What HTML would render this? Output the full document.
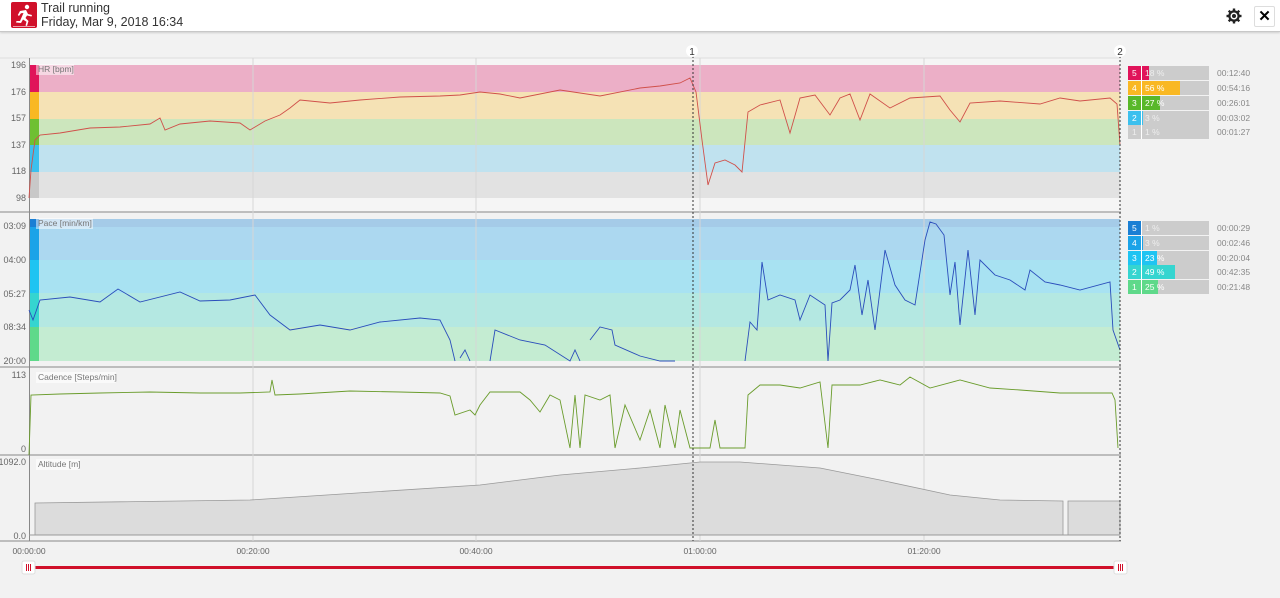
<!DOCTYPE html>
<html><head><meta charset="utf-8"><style>
body{margin:0;width:1280px;height:598px;background:#f2f2f2;font-family:"Liberation Sans",sans-serif;overflow:hidden;position:relative}
.hdr{position:absolute;left:0;top:0;width:1280px;height:31px;background:#fff;border-bottom:1px solid #c8c8c8;box-shadow:0 1px 2px rgba(0,0,0,.15)}
.logo{position:absolute;left:11px;top:2px;width:26px;height:26px;background:#d0102a;border-radius:2px}
.t1{position:absolute;left:41px;top:1px;font-size:12.5px;color:#333}
.t2{position:absolute;left:41px;top:15px;font-size:12.5px;color:#333}
.x{position:absolute;left:1254px;top:6px;width:19px;height:19px;border:1px solid #ddd;border-radius:2px;font-size:15px;font-weight:bold;text-align:center;line-height:19px}
svg text{font-family:"Liberation Sans",sans-serif}
</style></head><body>
<div class="hdr">
<div class="logo"><svg width="26" height="26" viewBox="0 0 26 26"><g fill="#fff"><circle cx="16" cy="5" r="2.2"/><path d="M9 9 L15 8 L17 12 L21 13 L20.5 14.5 L16 13.5 L14.5 16 L17.5 19 L16 24 L14.5 23.5 L15.5 19.8 L12 17.5 L10 21 L5 20.5 L5.5 19 L9 19 L12.5 11 L10 11.3 L8 14 L6.8 13 Z"/></g><rect x="2" y="24" width="22" height="1" fill="#fff" opacity=".6"/></svg></div>
<div class="t1">Trail running</div><div class="t2">Friday, Mar 9, 2018 16:34</div>
<svg style="position:absolute;left:1226px;top:8px" width="16" height="16" viewBox="0 0 16 16"><circle cx="8" cy="8" r="4.5" fill="none" stroke="#222" stroke-width="2.5"/><g stroke="#222" stroke-width="2.4"><line x1="8" y1="0.5" x2="8" y2="15.5"/><line x1="0.5" y1="8" x2="15.5" y2="8"/><line x1="2.7" y1="2.7" x2="13.3" y2="13.3"/><line x1="13.3" y1="2.7" x2="2.7" y2="13.3"/></g><circle cx="8" cy="8" r="3.5" fill="#fff"/><circle cx="8" cy="8" r="2" fill="#222"/></svg>
<div class="x">✕</div>
</div>
<svg width="1280" height="598" style="position:absolute;left:0;top:0">
<!-- panel backgrounds -->
<rect x="29" y="58" width="1091" height="154" fill="#f5f5f5"/>
<line x1="0" y1="58" x2="1121" y2="58" stroke="#ddd"/>
<!-- HR bands -->
<rect x="29" y="65" width="1091" height="27" fill="#ecafc7"/>
<rect x="29" y="92" width="1091" height="27" fill="#f5e2b5"/>
<rect x="29" y="119" width="1091" height="26" fill="#cce6bd"/>
<rect x="29" y="145" width="1091" height="27" fill="#c0e2ef"/>
<rect x="29" y="172" width="1091" height="26" fill="#e2e2e2"/>
<rect x="29" y="65" width="10" height="27" fill="#e0145a"/>
<rect x="29" y="92" width="10" height="27" fill="#f9b823"/>
<rect x="29" y="119" width="10" height="26" fill="#6fc032"/>
<rect x="29" y="145" width="10" height="27" fill="#3cc0ee"/>
<rect x="29" y="172" width="10" height="26" fill="#c8c8c8"/>
<line x1="0" y1="212" x2="1121" y2="212" stroke="#888"/>
<!-- Pace bands -->
<rect x="29" y="219" width="1091" height="8" fill="#a5cbe8"/>
<rect x="29" y="227" width="1091" height="33" fill="#acd8f0"/>
<rect x="29" y="260" width="1091" height="33" fill="#a8e2f2"/>
<rect x="29" y="293" width="1091" height="34" fill="#b4e8e2"/>
<rect x="29" y="327" width="1091" height="34" fill="#c4ecd2"/>
<rect x="29" y="219" width="10" height="8" fill="#1a7fd4"/>
<rect x="29" y="227" width="10" height="33" fill="#1ba3e8"/>
<rect x="29" y="260" width="10" height="33" fill="#1fc4f2"/>
<rect x="29" y="293" width="10" height="34" fill="#35d5d0"/>
<rect x="29" y="327" width="10" height="34" fill="#5fd98a"/>
<line x1="0" y1="367" x2="1121" y2="367" stroke="#888"/>
<line x1="0" y1="455" x2="1121" y2="455" stroke="#888"/>
<line x1="0" y1="541" x2="1121" y2="541" stroke="#888"/>
<line x1="29.5" y1="58" x2="29.5" y2="541" stroke="#888"/>
<!-- grid -->
<g stroke="#d6d6d6"><line x1="253" y1="58" x2="253" y2="541"/><line x1="476" y1="58" x2="476" y2="541"/><line x1="700" y1="58" x2="700" y2="541"/><line x1="924" y1="58" x2="924" y2="541"/></g>
<!-- labels -->
<g font-size="9" fill="#666" text-anchor="end">
<text x="26" y="68">196</text><text x="26" y="95">176</text><text x="26" y="121">157</text><text x="26" y="148">137</text><text x="26" y="174">118</text><text x="26" y="201">98</text>
<text x="26" y="229">03:09</text><text x="26" y="263">04:00</text><text x="26" y="297">05:27</text><text x="26" y="330">08:34</text><text x="26" y="364">20:00</text>
<text x="26" y="378">113</text><text x="26" y="452">0</text>
<text x="26" y="465">1092.0</text><text x="26" y="539">0.0</text>
</g>
<g font-size="8.5" fill="#777">
<rect x="36" y="64" width="38" height="11" fill="#fff" opacity=".5"/><text x="38" y="72">HR [bpm]</text>
<rect x="36" y="218" width="57" height="11" fill="#fff" opacity=".5"/><text x="38" y="226">Pace [min/km]</text>
<rect x="36" y="372" width="80" height="11" fill="#fff" opacity=".6"/><text x="38" y="380">Cadence [Steps/min]</text>
<rect x="36" y="459" width="44" height="11" fill="#fff" opacity=".6"/><text x="38" y="467">Altitude [m]</text>
</g>
<!-- HR line -->
<polyline fill="none" stroke="#d0504a" stroke-width="0.9" points="29,198 31,170 35,140 40,135 60,133 90,128 120,127 150,124 160,118 165,130 180,124 210,121 240,123 250,130 265,121 280,115 290,108 300,100 330,103 360,100 400,97 440,96 460,95 480,92 500,94 520,98 560,90 600,96 640,88 660,86 680,83 690,78 696,92 702,140 708,185 715,163 725,160 735,165 742,172 748,112 760,105 780,100 790,133 800,98 815,95 830,115 840,98 850,94 860,120 870,94 890,108 910,98 940,96 950,110 960,122 970,103 1000,101 1040,104 1060,98 1080,101 1110,98 1117,104 1120,145"/>
<!-- Pace line -->
<polyline fill="none" stroke="#2a4dbb" stroke-width="0.9" points="29,310 33,320 40,300 70,297 100,302 118,289 140,302 180,292 200,301 230,300 255,295 270,315 290,330 320,325 350,330 380,322 420,318 440,320 450,340 455,361 M"/>
<polyline fill="none" stroke="#2a4dbb" stroke-width="0.9" points="460,358 465,350 470,361 M"/>
<polyline fill="none" stroke="#2a4dbb" stroke-width="0.9" points="490,361 495,330 520,340 545,345 570,361 575,350 580,361 M"/>
<polyline fill="none" stroke="#2a4dbb" stroke-width="0.9" points="590,340 600,327 612,330 615,345 640,356 660,361 675,361"/>
<polyline fill="none" stroke="#2a4dbb" stroke-width="0.9" points="745,361 750,322 757,330 762,262 768,300 780,295 795,300 800,320 810,295 825,305 828,361 832,303 840,300 850,290 855,265 862,315 868,280 875,330 885,250 895,285 905,300 915,305 925,240 930,222 936,224 944,235 950,295 955,262 960,325 968,250 975,315 980,260 995,275 1010,280 1025,290 1030,270 1045,282 1060,285 1080,290 1110,282 1113,330 1120,350"/>
<!-- Cadence -->
<polyline fill="none" stroke="#6a9c2c" stroke-width="0.9" points="29,455 31,395 60,394 100,393 150,392 200,393 240,393 270,392 272,380 275,395 300,394 350,391 400,392 440,393 450,396 455,415 470,410 475,415 480,405 490,392 500,392 520,392 530,400 540,412 550,395 560,400 570,448 575,395 580,448 585,395 600,400 610,395 615,448 625,405 640,440 650,410 660,448 665,405 675,448 680,410 690,448 695,448 710,448 715,420 720,448 745,448 748,395 760,385 780,385 800,388 820,382 828,448 832,385 860,385 880,380 900,385 910,377 930,388 960,380 990,388 1020,390 1060,393 1100,393 1112,393 1115,400 1118,448"/>
<!-- Altitude -->
<path d="M35,535 L35,503 L250,500 L480,485 L560,475 L640,468 L700,462 L740,462 L820,468 L880,480 L950,495 L1000,500 L1063,501 L1063,535 Z M1068,535 L1068,501 L1120,501 L1120,535 Z" fill="#dcdcdc" stroke="#999" stroke-width="0.8"/>
<line x1="29" y1="535" x2="1120" y2="535" stroke="#999"/>
<!-- markers -->
<line x1="693" y1="56" x2="693" y2="541" stroke="#333" stroke-dasharray="2,2"/>
<line x1="1120" y1="56" x2="1120" y2="541" stroke="#333" stroke-dasharray="2,2"/>
<circle cx="692" cy="51" r="6" fill="#fff"/><text x="692" y="55" font-size="10" text-anchor="middle" fill="#333">1</text>
<circle cx="1120" cy="51" r="6" fill="#fff"/><text x="1120" y="55" font-size="10" text-anchor="middle" fill="#333">2</text>
<!-- time labels -->
<g font-size="8.5" fill="#666" text-anchor="middle">
<text x="29" y="554">00:00:00</text><text x="253" y="554">00:20:00</text><text x="476" y="554">00:40:00</text><text x="700" y="554">01:00:00</text><text x="924" y="554">01:20:00</text>
</g>
<!-- slider -->
<rect x="29" y="566" width="1091" height="3" fill="#d0102a"/>
<rect x="22" y="561" width="13" height="13" rx="2" fill="#fff" stroke="#ddd"/>
<rect x="1114" y="561" width="13" height="13" rx="2" fill="#fff" stroke="#ddd"/>
<g stroke="#d0102a" stroke-width="1"><line x1="26.5" y1="564" x2="26.5" y2="571"/><line x1="28.5" y1="564" x2="28.5" y2="571"/><line x1="30.5" y1="564" x2="30.5" y2="571"/><line x1="1118.5" y1="564" x2="1118.5" y2="571"/><line x1="1120.5" y1="564" x2="1120.5" y2="571"/><line x1="1122.5" y1="564" x2="1122.5" y2="571"/></g>
<!-- zone bars -->
<g font-size="8.5">
<g transform="translate(1128,66)">
<rect width="81" height="14" fill="#ccc"/><rect width="21" height="14" fill="#e0145a"/><text x="4" y="10" fill="#fff">5</text><text x="17" y="10" fill="#eee">18 %</text>
<text x="89" y="10" fill="#888">00:12:40</text></g>
<g transform="translate(1128,81)">
<rect width="81" height="14" fill="#ccc"/><rect width="52" height="14" fill="#f9b823"/><text x="4" y="10" fill="#fff">4</text><text x="17" y="10" fill="#fff">56 %</text><text x="89" y="10" fill="#888">00:54:16</text></g>
<g transform="translate(1128,96)">
<rect width="81" height="14" fill="#ccc"/><rect width="32" height="14" fill="#58b82a"/><text x="4" y="10" fill="#fff">3</text><text x="17" y="10" fill="#fff">27 %</text><text x="89" y="10" fill="#888">00:26:01</text></g>
<g transform="translate(1128,111)">
<rect width="81" height="14" fill="#ccc"/><rect width="15" height="14" fill="#3cc0ee"/><text x="4" y="10" fill="#fff">2</text><text x="17" y="10" fill="#eee">3 %</text><text x="89" y="10" fill="#888">00:03:02</text></g>
<g transform="translate(1128,125)">
<rect width="81" height="14" fill="#ccc"/><text x="4" y="10" fill="#eee">1</text><text x="17" y="10" fill="#eee">1 %</text><text x="89" y="10" fill="#888">00:01:27</text></g>
<g transform="translate(1128,221)">
<rect width="81" height="14" fill="#ccc"/><rect width="14" height="14" fill="#1a7fd4"/><text x="4" y="10" fill="#fff">5</text><text x="17" y="10" fill="#eee">1 %</text><text x="89" y="10" fill="#888">00:00:29</text></g>
<g transform="translate(1128,236)">
<rect width="81" height="14" fill="#ccc"/><rect width="15" height="14" fill="#1ba3e8"/><text x="4" y="10" fill="#fff">4</text><text x="17" y="10" fill="#eee">3 %</text><text x="89" y="10" fill="#888">00:02:46</text></g>
<g transform="translate(1128,251)">
<rect width="81" height="14" fill="#ccc"/><rect width="29" height="14" fill="#1fc4f2"/><text x="4" y="10" fill="#fff">3</text><text x="17" y="10" fill="#fff">23 %</text><text x="89" y="10" fill="#888">00:20:04</text></g>
<g transform="translate(1128,265)">
<rect width="81" height="14" fill="#ccc"/><rect width="47" height="14" fill="#35d5d0"/><text x="4" y="10" fill="#fff">2</text><text x="17" y="10" fill="#fff">49 %</text><text x="89" y="10" fill="#888">00:42:35</text></g>
<g transform="translate(1128,280)">
<rect width="81" height="14" fill="#ccc"/><rect width="30" height="14" fill="#5fd98a"/><text x="4" y="10" fill="#fff">1</text><text x="17" y="10" fill="#fff">25 %</text><text x="89" y="10" fill="#888">00:21:48</text></g>
<g stroke="#fff" stroke-width="1"><line x1="1141.5" y1="66" x2="1141.5" y2="139"/><line x1="1141.5" y1="221" x2="1141.5" y2="294"/></g>
</g>
</svg>
</body></html>
